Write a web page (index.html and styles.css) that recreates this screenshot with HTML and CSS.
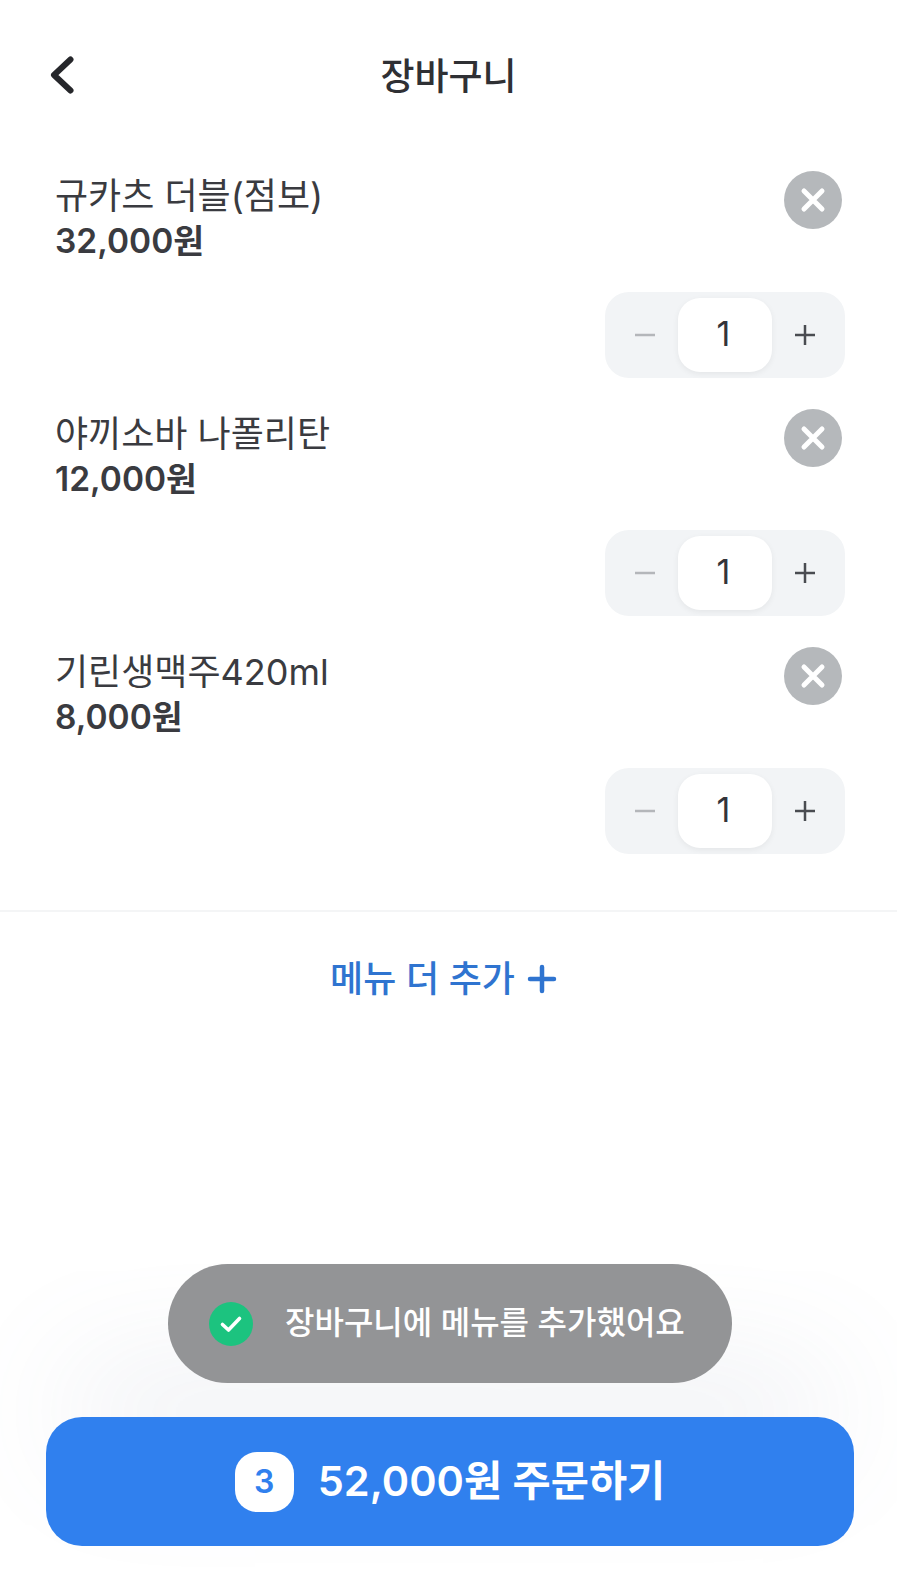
FILE: index.html
```html
<!DOCTYPE html>
<html lang="ko">
<head>
    <meta charset="UTF-8">
    <meta name="viewport" content="width=device-width, initial-scale=1.0">
    <title>장바구니</title>
    <link rel="stylesheet" href="styles.css">
</head>
<body>
    <div class="page">
        <div class="header">
            <a class="back-btn" href="#">
                <svg width="26" height="38" viewBox="0 0 26 38"><path d="M21.5 3.5 5 19l16.5 15.5" fill="none" stroke="#26272b" stroke-width="6" stroke-linecap="round" stroke-linejoin="round"/></svg>
            </a>
            <h1>장바구니</h1>
        </div>

        <div class="cart-list">
            <div class="cart-item">
                <div class="item-top">
                    <div class="item-info">
                        <div class="item-name">규카츠 더블(점보)</div>
                        <div class="item-price">32,000원</div>
                    </div>
                    <button class="remove-btn">
                        <svg width="26" height="26" viewBox="0 0 26 26"><path d="M4 4l18 18M22 4 4 22" stroke="#fff" stroke-width="5" stroke-linecap="round"/></svg>
                    </button>
                </div>
                <div class="stepper">
                    <span class="step">
                        <svg width="22" height="22" viewBox="0 0 22 22"><path d="M1 11h20" stroke="#b4b6ba" stroke-width="2.5"/></svg>
                    </span>
                    <span class="count">1</span>
                    <span class="step">
                        <svg width="22" height="22" viewBox="0 0 22 22"><path d="M11 1v20M1 11h20" stroke="#4a4c51" stroke-width="2.5"/></svg>
                    </span>
                </div>
            </div>
            <div class="cart-item">
                <div class="item-top">
                    <div class="item-info">
                        <div class="item-name">야끼소바 나폴리탄</div>
                        <div class="item-price">12,000원</div>
                    </div>
                    <button class="remove-btn">
                        <svg width="26" height="26" viewBox="0 0 26 26"><path d="M4 4l18 18M22 4 4 22" stroke="#fff" stroke-width="5" stroke-linecap="round"/></svg>
                    </button>
                </div>
                <div class="stepper">
                    <span class="step">
                        <svg width="22" height="22" viewBox="0 0 22 22"><path d="M1 11h20" stroke="#b4b6ba" stroke-width="2.5"/></svg>
                    </span>
                    <span class="count">1</span>
                    <span class="step">
                        <svg width="22" height="22" viewBox="0 0 22 22"><path d="M11 1v20M1 11h20" stroke="#4a4c51" stroke-width="2.5"/></svg>
                    </span>
                </div>
            </div>
            <div class="cart-item">
                <div class="item-top">
                    <div class="item-info">
                        <div class="item-name">기린생맥주420ml</div>
                        <div class="item-price">8,000원</div>
                    </div>
                    <button class="remove-btn">
                        <svg width="26" height="26" viewBox="0 0 26 26"><path d="M4 4l18 18M22 4 4 22" stroke="#fff" stroke-width="5" stroke-linecap="round"/></svg>
                    </button>
                </div>
                <div class="stepper">
                    <span class="step">
                        <svg width="22" height="22" viewBox="0 0 22 22"><path d="M1 11h20" stroke="#b4b6ba" stroke-width="2.5"/></svg>
                    </span>
                    <span class="count">1</span>
                    <span class="step">
                        <svg width="22" height="22" viewBox="0 0 22 22"><path d="M11 1v20M1 11h20" stroke="#4a4c51" stroke-width="2.5"/></svg>
                    </span>
                </div>
            </div>
        </div>

        <a class="add-more" href="#">
            메뉴 더 추가
            <svg width="30" height="30" viewBox="0 0 30 30"><path d="M15 3v24M3 15h24" stroke="#2f74d0" stroke-width="4.5" stroke-linecap="round"/></svg>
        </a>

        <div class="footer">
            <button class="order-btn">
                <span class="order-count">3</span>
                <span class="order-label">52,000원 주문하기</span>
            </button>
        </div>

        <div class="toast">
            <span class="toast-icon">
                <svg width="24" height="20" viewBox="0 0 24 20"><path d="M3.5 10.5 9.5 16 20.5 4.5" fill="none" stroke="#fff" stroke-width="3.6" stroke-linecap="round" stroke-linejoin="round"/></svg>
            </span>
            <span class="toast-text">장바구니에 메뉴를 추가했어요</span>
        </div>
    </div>
</body>
</html>
```

FILE: styles.css
```css
/* General */
body {
    font-family: Inter, "Noto Sans CJK KR", sans-serif;
    margin: 0;
    padding: 0;
    background-color: #fff;
    overflow-x: hidden;
}

.page {
    position: relative;
    height: 1572px;
    display: flex;
    flex-direction: column;
    overflow: hidden;
}

/* Header */
.header {
    height: 150px;
    flex-shrink: 0;
    position: relative;
    display: flex;
    justify-content: center;
    align-items: center;
}

.header h1 {
    margin: 0;
    font-size: 37px;
    font-weight: 500;
    color: #2f3034;
    transform: translateY(-1px);
}

.back-btn {
    position: absolute;
    left: 49px;
    top: 56px;
    line-height: 0;
}

/* Cart */
.cart-list {
    padding: 0 53px 46px 55px;
    border-bottom: 2px solid #f4f5f6;
}

.cart-item {
    height: 238px;
    display: flex;
    flex-direction: column;
}

.item-top {
    display: flex;
    justify-content: space-between;
    align-items: flex-start;
    height: 142px;
}

.item-name {
    font-size: 36px;
    line-height: 44px;
    color: #3a3b40;
    margin-top: 24px;
}

.item-price {
    font-size: 33.5px;
    line-height: 44px;
    font-weight: 600;
    color: #3a3b40;
    margin-top: 1px;
}

.remove-btn {
    width: 58px;
    height: 58px;
    margin-top: 21px;
    margin-right: 2px;
    padding: 0;
    border: none;
    border-radius: 50%;
    background-color: #b5b8bb;
    display: flex;
    justify-content: center;
    align-items: center;
}

.stepper {
    align-self: flex-end;
    width: 240px;
    height: 86px;
    border-radius: 24px;
    background-color: #f2f4f6;
    display: flex;
    align-items: center;
    justify-content: space-between;
    box-sizing: border-box;
    padding: 0 6px;
    margin-right: -1px;
}

.step {
    width: 68px;
    display: flex;
    justify-content: center;
    align-items: center;
}

.count {
    width: 94px;
    height: 74px;
    border-radius: 22px;
    background-color: #fff;
    box-shadow: 0 2px 6px rgba(0, 0, 0, 0.06);
    display: flex;
    justify-content: center;
    align-items: center;
    font-size: 34px;
    line-height: 70px;
    padding: 0 3px 2px 0;
    box-sizing: border-box;
    color: #33343a;
}

/* Add more */
.add-more {
    margin-top: 42px;
    display: flex;
    justify-content: center;
    align-items: center;
    gap: 12px;
    font-size: 36px;
    font-weight: 500;
    line-height: 50px;
    color: #2f74d0;
    text-decoration: none;
    transform: translateX(-5px);
}

/* Bottom button */
.footer {
    margin-top: auto;
    padding: 0 43px 26px 46px;
}

.order-btn {
    width: 100%;
    height: 129px;
    border: none;
    border-radius: 36px;
    background-color: #3080ee;
    color: #fff;
    font-family: inherit;
    display: flex;
    justify-content: center;
    align-items: center;
    gap: 24px;
    box-shadow: 0 -70px 130px -30px rgba(120, 130, 160, 0.16);
}

.order-label {
    font-size: 41.5px;
    font-weight: 600;
    line-height: 50px;
    padding-bottom: 2px;
}

.order-count {
    width: 59px;
    height: 60px;
    border-radius: 22px;
    background-color: #fff;
    color: #3080ee;
    font-size: 32px;
    font-weight: 600;
    display: flex;
    justify-content: center;
    align-items: center;
}

/* Toast */
.toast {
    position: absolute;
    left: 168px;
    top: 1264px;
    width: 564px;
    height: 119px;
    box-sizing: border-box;
    padding-left: 41px;
    border-radius: 60px;
    background-color: #939496;
    color: #fff;
    font-size: 32px;
    font-weight: 500;
    display: flex;
    align-items: center;
    gap: 32px;
}

.toast-text {
    line-height: 44px;
    padding-bottom: 2px;
}

.toast-icon {
    width: 44px;
    height: 44px;
    border-radius: 50%;
    background-color: #1cc37f;
    display: flex;
    justify-content: center;
    align-items: center;
}
```
